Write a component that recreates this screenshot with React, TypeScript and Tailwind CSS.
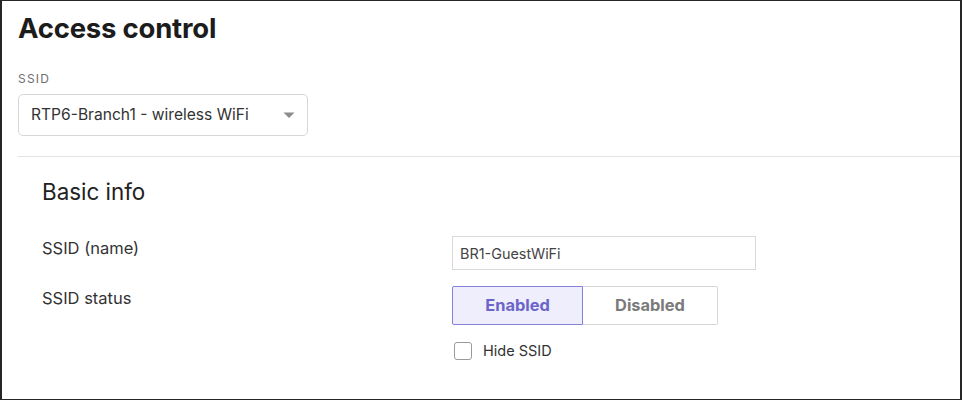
import { useState } from "react"

const font = { fontFamily: "Inter, 'Noto Sans', sans-serif" }

export default function App() {
  const [status, setStatus] = useState<"enabled" | "disabled">("enabled")
  const [hidden, setHidden] = useState(false)

  return (
    <div
      className="box-border h-[400px] w-[962px] overflow-hidden border border-l-2 border-r-2 border-[#262626] bg-white text-[#222]"
      style={font}
    >
      <div className="pl-[16px]">
        <h1 className="pt-[10px] text-[27.5px] leading-[34px] font-bold tracking-[-0.2px] text-[#1c1c1c]">
          Access control
        </h1>

        <div className="mt-[27px] text-[12px] leading-[14px] tracking-[1.2px] text-[#6e6e6e]">
          SSID
        </div>
        <div className="mt-[8px] flex h-[42px] w-[290px] items-center justify-between rounded-[5px] border border-[#d6d6d6] pr-[12px] pl-[12px]">
          <span className="text-[15.6px] text-[#333]">RTP6-Branch1 - wireless WiFi</span>
          <svg width="12" height="7" viewBox="0 0 12 7" className="mt-[1px]">
            <path d="M0.5 0.5 L11.5 0.5 L6 6 Z" fill="#8c8c8c" />
          </svg>
        </div>

        <div className="mt-[20px] h-px bg-[#e2e2e2]" />

        <div className="pl-[24px]">
          <h2 className="mt-[21px] text-[22.4px] leading-[28px] font-normal text-[#222]">Basic info</h2>

          <div className="mt-[30px] flex items-start">
            <div className="w-[410px] text-[16.5px] leading-[24px] text-[#333]">SSID (name)</div>
            <input
              className="box-border h-[34px] w-[304px] border border-[#d9d9d9] px-[7px] text-[14.4px] text-[#444] outline-none"
              defaultValue="BR1-GuestWiFi"
            />
          </div>

          <div className="mt-[16px] flex items-start">
            <div className="w-[410px] text-[16.5px] leading-[24px] text-[#333]">SSID status</div>
            <div>
              <div className="flex h-[39px]">
                <button
                  onClick={() => setStatus("enabled")}
                  className={
                    status === "enabled"
                      ? "w-[131px] rounded-l-[2px] border border-[#8680d8] bg-[#eeeefd] text-[16.4px] font-bold text-[#6c64c8]"
                      : "w-[131px] rounded-l-[2px] border border-[#d6d6d6] bg-white text-[16.4px] font-bold text-[#7a7a7a]"
                  }
                >
                  Enabled
                </button>
                <button
                  onClick={() => setStatus("disabled")}
                  className={
                    status === "disabled"
                      ? "w-[135px] rounded-r-[2px] border border-[#8680d8] bg-[#eeeefd] text-[16.4px] font-bold text-[#6c64c8]"
                      : "w-[135px] rounded-r-[2px] border border-l-0 border-[#d6d6d6] bg-white text-[16.4px] font-bold text-[#7a7a7a]"
                  }
                >
                  Disabled
                </button>
              </div>
              <label className="mt-[15px] flex cursor-pointer items-center pl-[2px]">
                <input
                  type="checkbox"
                  checked={hidden}
                  onChange={(e) => setHidden(e.target.checked)}
                  className="h-[18px] w-[18px] appearance-none rounded-[3px] border border-[#9a9a9a] bg-white checked:bg-[#6c64c8]"
                />
                <span className="ml-[11px] text-[14.5px] text-[#333]">Hide SSID</span>
              </label>
            </div>
          </div>
        </div>
      </div>
    </div>
  )
}
